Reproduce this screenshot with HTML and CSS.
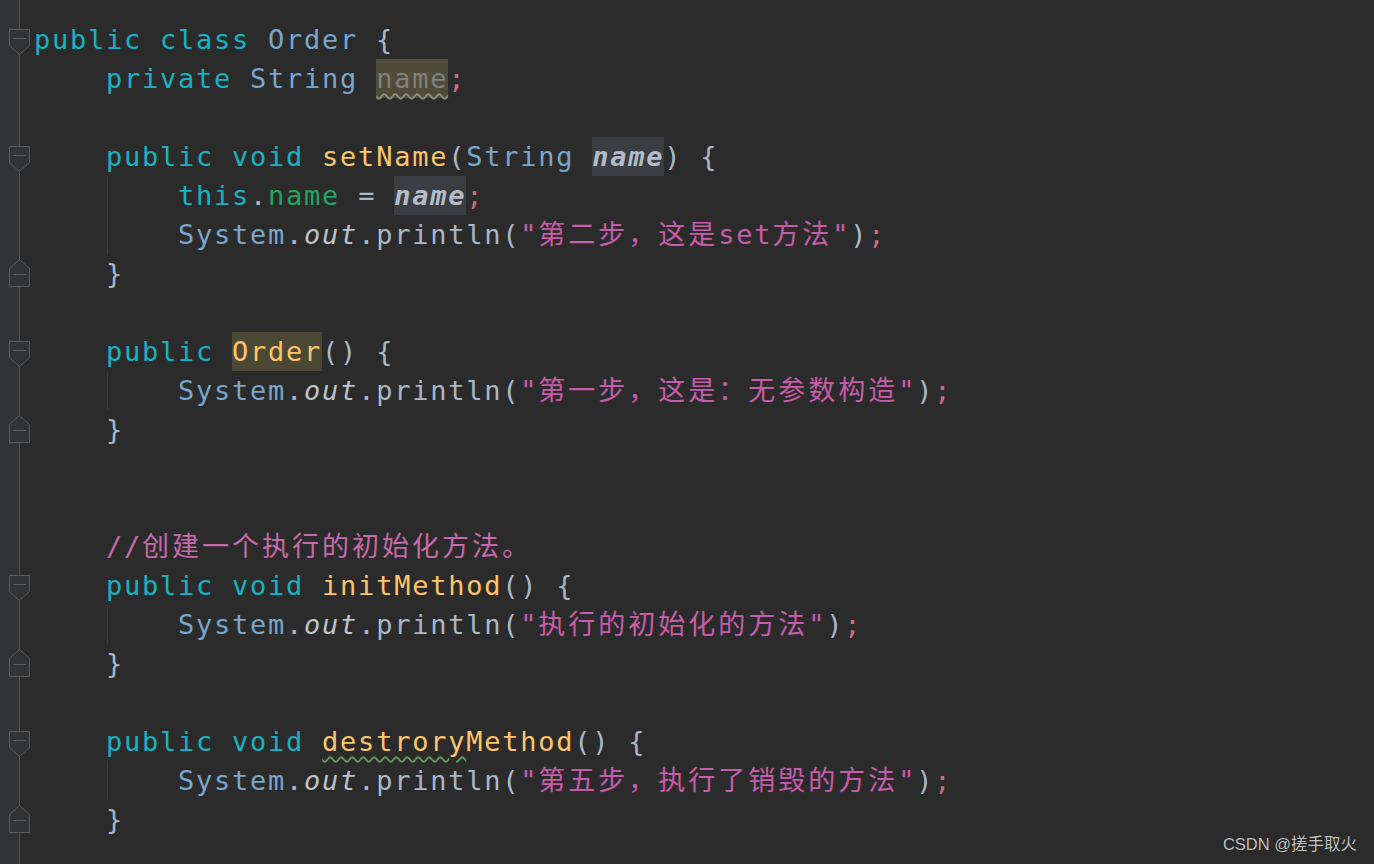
FILE: index.html
```html
<!DOCTYPE html>
<html lang="zh">
<head>
<meta charset="utf-8">
<title>Order.java</title>
<link rel="stylesheet" href="styles.css">
</head>
<body>
<div class="editor">
  <div class="line"><div class="gut"><svg class="fold" width="21" height="39" viewBox="0 0 21 39"><path d="M0.5 9.5H20.5V25.5L10.5 34.5L0.5 25.5Z"/><path d="M4 18.5H17"/></svg></div><pre class="code"><span class="kw">public class </span><span class="cls">Order</span> {</pre></div>
  <div class="line"><div class="gut"></div><pre class="code">    <span class="kw">private </span><span class="cls">String</span> <span class="unused">name</span><span class="semi">;</span></pre></div>
  <div class="line"><div class="gut"></div><pre class="code"></pre></div>
  <div class="line"><div class="gut"><svg class="fold" width="21" height="39" viewBox="0 0 21 39"><path d="M0.5 9.5H20.5V25.5L10.5 34.5L0.5 25.5Z"/><path d="M4 18.5H17"/></svg></div><pre class="code">    <span class="kw">public void </span><span class="fn">setName</span>(<span class="cls">String</span> <span class="param">name</span>) {</pre></div>
  <div class="line"><div class="gut"></div><pre class="code guide">        <span class="kw">this</span>.<span class="field">name</span> = <span class="param">name</span><span class="semi">;</span></pre></div>
  <div class="line"><div class="gut"></div><pre class="code guide">        <span class="cls">System</span>.<span class="stat">out</span>.println(<span class="str">"<span class="zh">第二步，这是</span>set<span class="zh">方法</span>"</span>)<span class="semi">;</span></pre></div>
  <div class="line"><div class="gut"><svg class="fold" width="21" height="39" viewBox="0 0 21 39"><path d="M10.5 5.5L20.5 14.5V32.5H0.5V14.5Z"/><path d="M4 20.5H17"/></svg></div><pre class="code">    }</pre></div>
  <div class="line"><div class="gut"></div><pre class="code"></pre></div>
  <div class="line"><div class="gut"><svg class="fold" width="21" height="39" viewBox="0 0 21 39"><path d="M0.5 9.5H20.5V25.5L10.5 34.5L0.5 25.5Z"/><path d="M4 18.5H17"/></svg></div><pre class="code">    <span class="kw">public </span><span class="fn ctor">Order</span>() {</pre></div>
  <div class="line"><div class="gut"></div><pre class="code guide">        <span class="cls">System</span>.<span class="stat">out</span>.println(<span class="str">"<span class="zh">第一步，这是：无参数构造</span>"</span>)<span class="semi">;</span></pre></div>
  <div class="line"><div class="gut"><svg class="fold" width="21" height="39" viewBox="0 0 21 39"><path d="M10.5 5.5L20.5 14.5V32.5H0.5V14.5Z"/><path d="M4 20.5H17"/></svg></div><pre class="code">    }</pre></div>
  <div class="line"><div class="gut"></div><pre class="code"></pre></div>
  <div class="line"><div class="gut"></div><pre class="code"></pre></div>
  <div class="line"><div class="gut"></div><pre class="code">    <span class="cmt">//<span class="zh">创建一个执行的初始化方法。</span></span></pre></div>
  <div class="line"><div class="gut"><svg class="fold" width="21" height="39" viewBox="0 0 21 39"><path d="M0.5 9.5H20.5V25.5L10.5 34.5L0.5 25.5Z"/><path d="M4 18.5H17"/></svg></div><pre class="code">    <span class="kw">public void </span><span class="fn">initMethod</span>() {</pre></div>
  <div class="line"><div class="gut"></div><pre class="code guide">        <span class="cls">System</span>.<span class="stat">out</span>.println(<span class="str">"<span class="zh">执行的初始化的方法</span>"</span>)<span class="semi">;</span></pre></div>
  <div class="line"><div class="gut"><svg class="fold" width="21" height="39" viewBox="0 0 21 39"><path d="M10.5 5.5L20.5 14.5V32.5H0.5V14.5Z"/><path d="M4 20.5H17"/></svg></div><pre class="code">    }</pre></div>
  <div class="line"><div class="gut"></div><pre class="code"></pre></div>
  <div class="line"><div class="gut"><svg class="fold" width="21" height="39" viewBox="0 0 21 39"><path d="M0.5 9.5H20.5V25.5L10.5 34.5L0.5 25.5Z"/><path d="M4 18.5H17"/></svg></div><pre class="code">    <span class="kw">public void </span><span class="fn"><span class="typo">destrory</span>Method</span>() {</pre></div>
  <div class="line"><div class="gut"></div><pre class="code guide">        <span class="cls">System</span>.<span class="stat">out</span>.println(<span class="str">"<span class="zh">第五步，执行了销毁的方法</span>"</span>)<span class="semi">;</span></pre></div>
  <div class="line"><div class="gut"><svg class="fold" width="21" height="39" viewBox="0 0 21 39"><path d="M10.5 5.5L20.5 14.5V32.5H0.5V14.5Z"/><path d="M4 20.5H17"/></svg></div><pre class="code">    }</pre></div>
</div>
<div class="watermark">CSDN @搓手取火</div>
</body>
</html>
```
FILE: styles.css
```css
html, body {
  margin: 0;
  padding: 0;
  height: 100%;
}
body {
  background: linear-gradient(to right, #313335 0, #313335 19px, #505050 19px, #505050 20px, #2b2b2b 20px);
  overflow: hidden;
  position: relative;
}
.editor {
  padding-top: 20px;
  display: flex;
  flex-direction: column;
}
.line {
  display: flex;
  height: 39px;
}
.gut {
  width: 34px;
  flex: none;
  height: 39px;
}
.fold {
  display: block;
  margin-left: 9px;
  fill: #313335;
  stroke: #5c5c5c;
  stroke-width: 1;
}
.code {
  margin: 0;
  height: 39px;
  font-family: "DejaVu Sans Mono", "Noto Sans CJK SC", monospace;
  font-size: 27px;
  letter-spacing: 1.75px;
  line-height: 39px;
  color: #a9b7c6;
  white-space: pre;
}
.guide {
  background-image: linear-gradient(to right, transparent 73px, #3b3b3b 73px, #3b3b3b 74px, transparent 74px);
}
.kw { color: #17b3c2; }
.cls { color: #79a6cd; }
.fn { color: #fcc56c; }
.field { color: #20a660; }
.stat { color: #bcc3cd; font-style: italic; }
.str { color: #c65daa; }
.cmt { color: #c56aaa; }
.semi { color: #cd6a82; }
.zh { letter-spacing: 3px; }
.param {
  display: inline-block;
  height: 39px;
  color: #b4bcc9;
  font-weight: bold;
  font-style: italic;
  background: #3a3d41;
}
.unused {
  display: inline-block;
  height: 39px;
  color: #808080;
  background: #4f4c39;
  text-decoration: underline wavy #8d8d80;
  text-decoration-thickness: 1.5px;
  text-underline-offset: 5px;
}
.ctor {
  display: inline-block;
  height: 39px;
  background: #4b4835;
}
.typo {
  text-decoration: underline wavy #5f9a55;
  text-decoration-thickness: 1.5px;
  text-underline-offset: 5px;
}
.watermark {
  position: absolute;
  right: 17px;
  bottom: 9px;
  font-family: "Liberation Sans", "Noto Sans CJK SC", sans-serif;
  font-size: 16.5px;
  color: #c4c4c4;
  text-shadow: 0 0 1px #000;
}
```
